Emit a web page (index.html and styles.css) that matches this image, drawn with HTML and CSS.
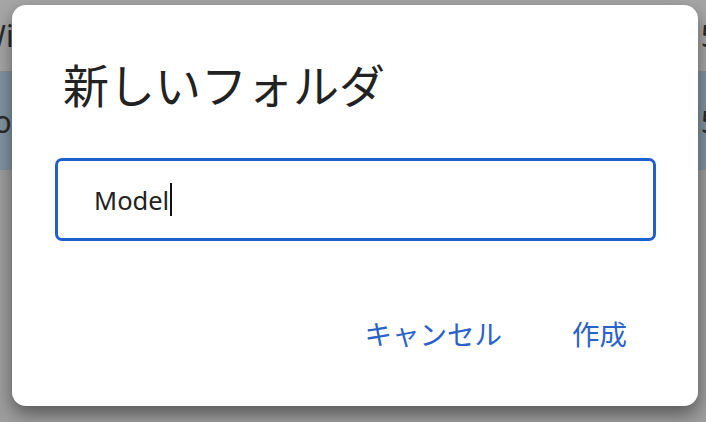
FILE: index.html
```html
<!DOCTYPE html>
<html lang="ja">
<head>
<meta charset="utf-8">
<title>新しいフォルダ</title>
<link rel="stylesheet" href="styles.css">
</head>
<body>
<div class="page">
  <div class="row row-head">
    <span class="cell-left">Wifi</span>
    <span class="cell-right">5</span>
  </div>
  <div class="row row-selected">
    <span class="cell-left">Foo</span>
    <span class="cell-right">5</span>
  </div>
  <div class="row row-rest"></div>
</div>
<div class="dialog" role="dialog">
  <h1 class="title">新しいフォルダ</h1>
  <div class="field"><span class="value">Model</span><span class="caret"></span></div>
  <div class="actions">
    <button class="btn">キャンセル</button>
    <button class="btn">作成</button>
  </div>
</div>
</body>
</html>
```
FILE: styles.css
```css
html, body {
  margin: 0;
  padding: 0;
  width: 706px;
  height: 422px;
  overflow: hidden;
  background: #9e9e9e;
  font-family: "Noto Sans", "Noto Sans CJK JP", sans-serif;
}
.page {
  display: flex;
  flex-direction: column;
  height: 422px;
}
.row {
  display: flex;
  justify-content: space-between;
  align-items: center;
  font-size: 30px;
  color: #2a2a2a;
  overflow: hidden;
}
.row-head {
  height: 72px;
  background: #a6a6a6;
  border-bottom: 1px solid #8e8e8e;
  box-sizing: border-box;
}
.row-selected {
  height: 98px;
  background: #8293a0;
}
.row-rest {
  flex: 1;
  background: #9e9e9e;
}
.cell-left { margin-left: -22px; }
.cell-right { margin-right: -12px; }

.dialog {
  position: absolute;
  left: 12px;
  top: 5px;
  width: 686px;
  height: 401px;
  box-sizing: border-box;
  background: #fff;
  border-radius: 14px;
  box-shadow: 0 8px 18px rgba(0,0,0,0.45);
  padding: 45px 42px 0 43px;
  display: flex;
  flex-direction: column;
}
.title {
  margin: 0 0 0 8px;
  font-family: "Noto Sans CJK JP", sans-serif;
  font-weight: 400;
  font-size: 46px;
  line-height: 66px;
  color: #222;
}
.field {
  margin-top: 42px;
  height: 83px;
  box-sizing: border-box;
  border: 3px solid #1f5fce;
  border-radius: 7px;
  display: flex;
  align-items: center;
  padding-left: 36px;
  font-size: 25.5px;
  color: #222;
}
.caret {
  display: inline-block;
  width: 2px;
  height: 33px;
  background: #111;
  margin-left: 1px;
}
.actions {
  display: flex;
  justify-content: flex-end;
  gap: 70px;
  margin-top: 74px;
  padding-right: 29px;
}
.btn {
  border: 0;
  background: none;
  padding: 0;
  font-family: "Noto Sans CJK JP", sans-serif;
  font-size: 27.5px;
  line-height: 36px;
  color: #2b62c9;
}
```
